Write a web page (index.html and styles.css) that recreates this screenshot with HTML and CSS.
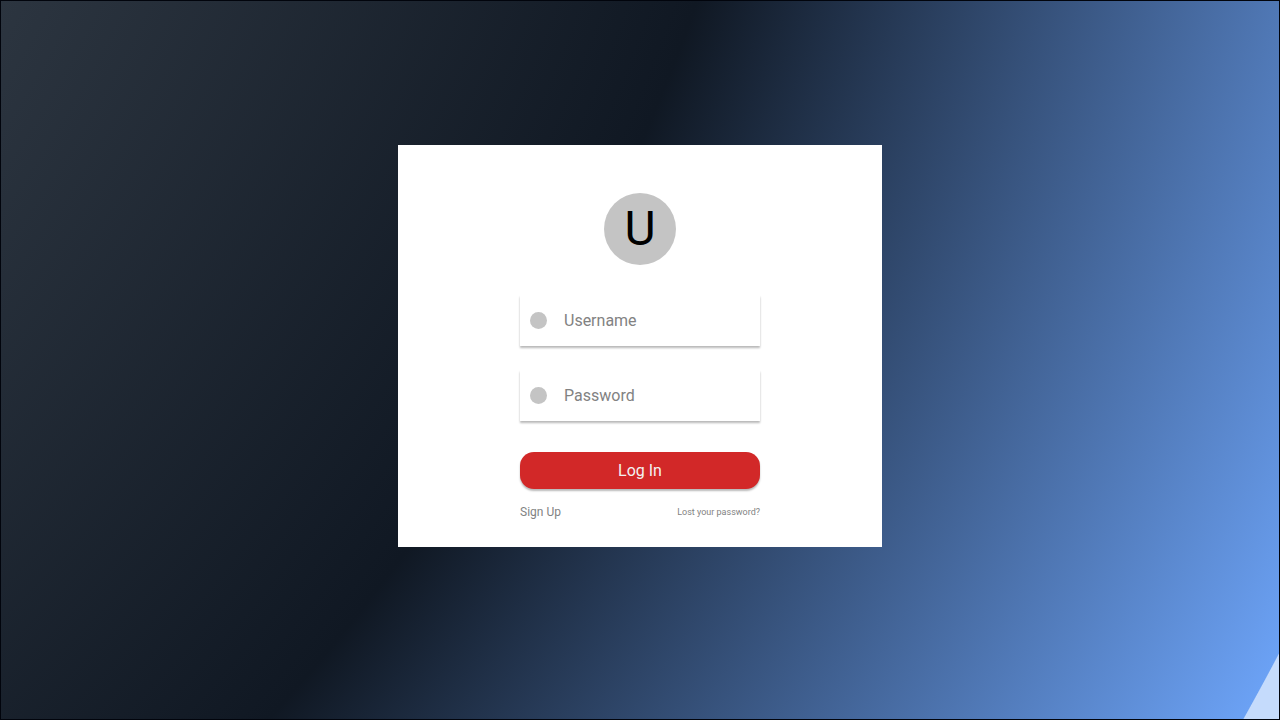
FILE: index.html
```html
<!DOCTYPE html>
<html lang="en">
<head>
<meta charset="utf-8">
<meta name="viewport" content="width=device-width, initial-scale=1">
<title>Log In</title>
<link rel="stylesheet" href="styles.css">
</head>
<body class="page">
<main class="card">
  <div class="avatar">U</div>
  <form class="form">
    <div class="field">
      <span class="dot"></span>
      <input class="input" type="text" placeholder="Username" aria-label="Username" autocomplete="username">
    </div>
    <div class="field">
      <span class="dot"></span>
      <input class="input" type="password" placeholder="Password" aria-label="Password" autocomplete="current-password">
    </div>
    <button class="submit" type="submit">Log In</button>
  </form>
  <nav class="links">
    <a class="link" href="#">Sign Up</a>
    <a class="link link-small" href="#">Lost your password?</a>
  </nav>
</main>
</body>
</html>
```

FILE: styles.css
```css
*, *::before, *::after {
  box-sizing: border-box;
}

.page {
  margin: 0;
  min-height: 100vh;
  display: flex;
  align-items: center;
  justify-content: center;
  padding: 0 16px 28px;
  border: 1px solid #01040c;
  font-family: Roboto, "Liberation Sans", sans-serif;
  font-size: 16px;
  background: radial-gradient(circle at -1307px -708px,
    #2c3540 1486px,
    #101823 2126px,
    #6ba1f4 2922px,
    #c5dbfc 2923px) border-box;
}

.card {
  width: 100%;
  max-width: 484px;
  display: flex;
  flex-direction: column;
  align-items: center;
  padding: 48px 24px 27px;
  background: #fff;
}

.avatar {
  width: 72px;
  height: 72px;
  display: flex;
  align-items: center;
  justify-content: center;
  border-radius: 50%;
  background: #c4c4c4;
  color: #000;
  font-size: 48px;
  line-height: 56px;
}

.form {
  width: 100%;
  max-width: 240px;
  margin-top: 30px;
  display: flex;
  flex-direction: column;
  gap: 24px;
}

.field {
  height: 51px;
  display: flex;
  align-items: center;
  gap: 17px;
  padding: 0 10px;
  background: #fff;
  box-shadow: 0 2px 2px rgba(0, 0, 0, 0.28);
}

.dot {
  flex: none;
  width: 17px;
  height: 17px;
  border-radius: 50%;
  background: #c4c4c4;
}

.input {
  flex: 1;
  min-width: 0;
  padding: 0;
  border: 0;
  outline: 0;
  background: transparent;
  color: #333;
  font: inherit;
}

.input::placeholder {
  color: #828282;
  opacity: 1;
}

.submit {
  height: 37px;
  margin-top: 7px;
  padding: 0;
  border: 0;
  border-radius: 14px;
  background: #d22828;
  box-shadow: 0 2px 2px rgba(0, 0, 0, 0.28);
  color: #f2f2f2;
  font: inherit;
  cursor: pointer;
}

.links {
  width: 100%;
  max-width: 240px;
  margin-top: 15px;
  display: flex;
  align-items: center;
  justify-content: space-between;
}

.link {
  color: #828282;
  font-size: 12px;
  line-height: 16px;
  text-decoration: none;
}

.link-small {
  font-size: 9px;
}
```
